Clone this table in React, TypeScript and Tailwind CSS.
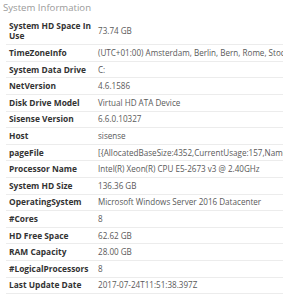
const rows: [string, string][] = [
  ['System HD Space In Use', '73.74 GB'],
  ['TimeZoneInfo', '(UTC+01:00) Amsterdam, Berlin, Bern, Rome, Stockholm, Vienna'],
  ['System Data Drive', 'C:'],
  ['NetVersion', '4.6.1586'],
  ['Disk Drive Model', 'Virtual HD ATA Device'],
  ['Sisense Version', '6.6.0.10327'],
  ['Host', 'sisense'],
  ['pageFile', '[{AllocatedBaseSize:4352,CurrentUsage:157,Name:C:\\pagefile.sys}]'],
  ['Processor Name', 'Intel(R) Xeon(R) CPU E5-2673 v3 @ 2.40GHz'],
  ['System HD Size', '136.36 GB'],
  ['OperatingSystem', 'Microsoft Windows Server 2016 Datacenter'],
  ['#Cores', '8'],
  ['HD Free Space', '62.62 GB'],
  ['RAM Capacity', '28.00 GB'],
  ['#LogicalProcessors', '8'],
  ['Last Update Date', '2017-07-24T11:51:38.397Z'],
]

export default function App() {
  return (
    <div className="h-[300px] w-[283px] overflow-hidden bg-white font-['Open_Sans',sans-serif]">
      <div className="pl-[3px] pt-[1px] text-[9.6px] leading-[14px] text-[#9a9a9a]">System Information</div>
      <table className="ml-[6px] mt-[3.6px] w-[600px] border-collapse">
        <tbody>
          {rows.map(([label, value]) => (
            <tr key={label} className="border-b border-[#ececec]">
              <td className="w-[89px] py-[2.8px] pl-[3px] pr-[4px] align-middle text-[8.4px] font-bold leading-[10px] text-[#333]">
                {label}
              </td>
              <td className="whitespace-nowrap py-[2.8px] pl-[3px] align-middle text-[8.1px] leading-[10px] text-[#595959]">
                {value}
              </td>
            </tr>
          ))}
        </tbody>
      </table>
    </div>
  )
}
